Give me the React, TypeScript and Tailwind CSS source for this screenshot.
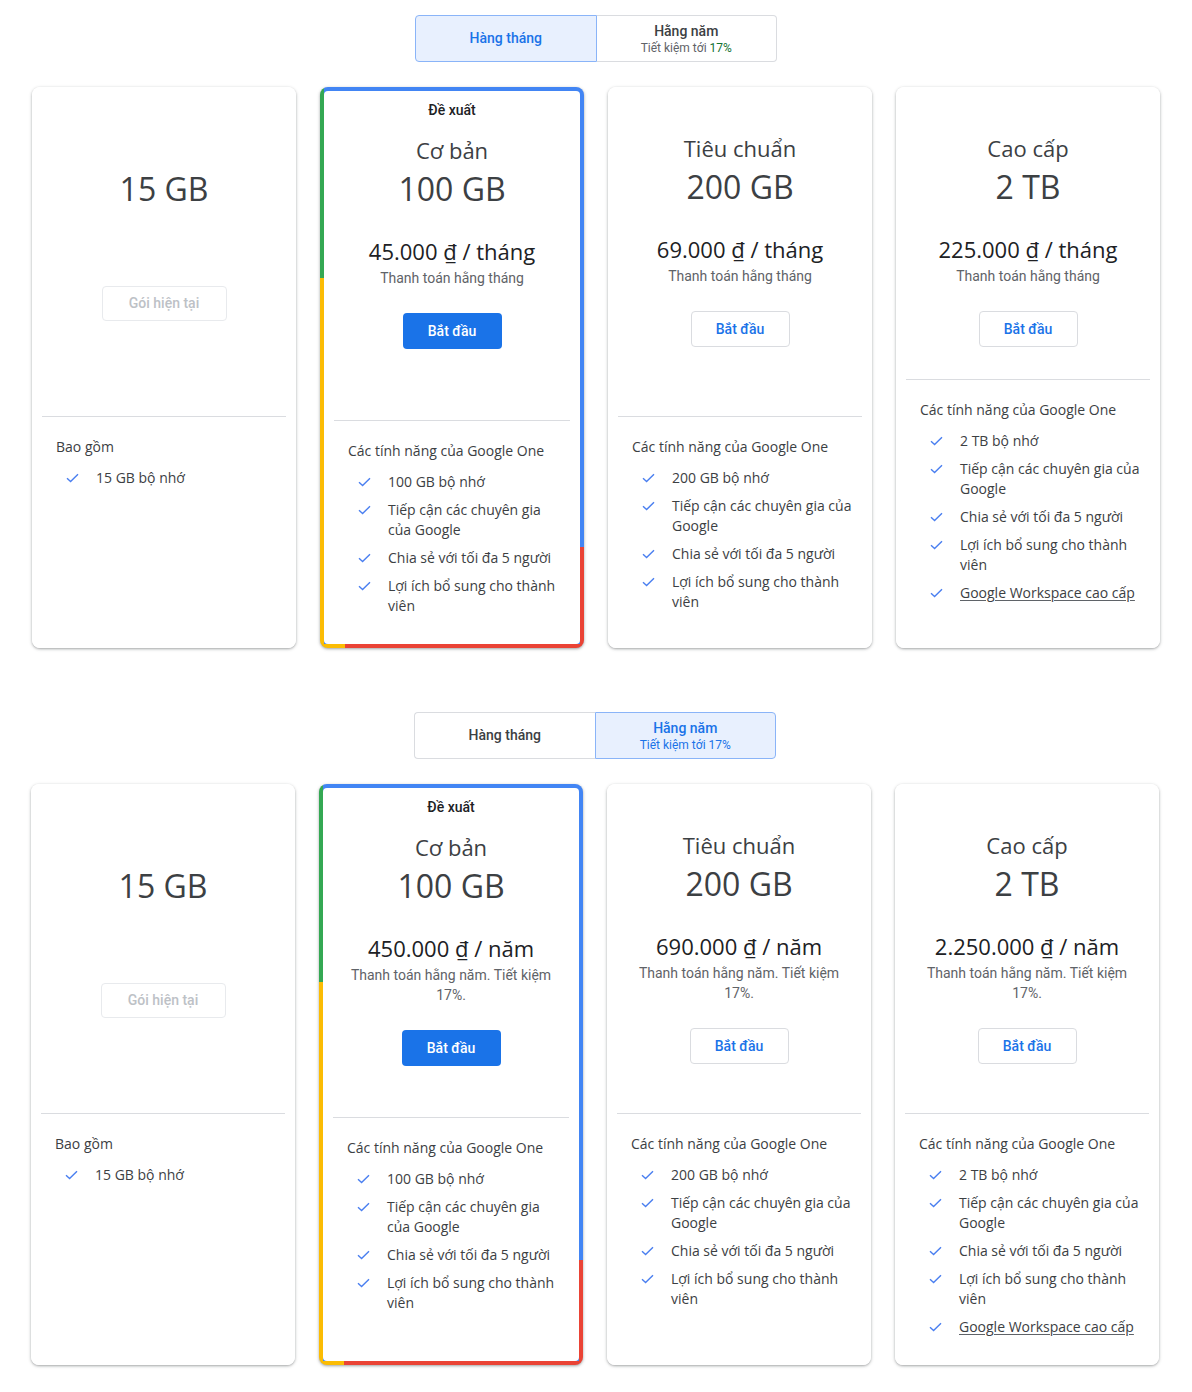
import React from 'react';

type Billing = 'month' | 'year';

interface Plan {
  id: string;
  label?: string;
  name?: string;
  size: string;
  monthPrice?: string;
  yearPrice?: string;
  current?: boolean;
  featuresTitle: string;
  features: string[];
  link?: string;
}

const PLANS: Plan[] = [
  {
    id: 'free',
    size: '15 GB',
    current: true,
    featuresTitle: 'Bao gồm',
    features: ['15 GB bộ nhớ'],
  },
  {
    id: 'basic',
    label: 'Đề xuất',
    name: 'Cơ bản',
    size: '100 GB',
    monthPrice: '45.000 ₫ / tháng',
    yearPrice: '450.000 ₫ / năm',
    featuresTitle: 'Các tính năng của Google One',
    features: ['100 GB bộ nhớ', 'Tiếp cận các chuyên gia của Google', 'Chia sẻ với tối đa 5 người', 'Lợi ích bổ sung cho thành viên'],
  },
  {
    id: 'standard',
    name: 'Tiêu chuẩn',
    size: '200 GB',
    monthPrice: '69.000 ₫ / tháng',
    yearPrice: '690.000 ₫ / năm',
    featuresTitle: 'Các tính năng của Google One',
    features: ['200 GB bộ nhớ', 'Tiếp cận các chuyên gia của Google', 'Chia sẻ với tối đa 5 người', 'Lợi ích bổ sung cho thành viên'],
  },
  {
    id: 'premium',
    name: 'Cao cấp',
    size: '2 TB',
    monthPrice: '225.000 ₫ / tháng',
    yearPrice: '2.250.000 ₫ / năm',
    featuresTitle: 'Các tính năng của Google One',
    features: ['2 TB bộ nhớ', 'Tiếp cận các chuyên gia của Google', 'Chia sẻ với tối đa 5 người', 'Lợi ích bổ sung cho thành viên'],
    link: 'Google Workspace cao cấp',
  },
];

const CheckIcon = () => (
  <svg width="13" height="10" viewBox="0 0 13 10" className="shrink-0 mt-[5px]">
    <path d="M1 5.2 L4.6 8.6 L12 1.2" fill="none" stroke="#4a7ff0" strokeWidth="1.4" />
  </svg>
);

// nút chọn kỳ thanh toán
const BillingToggle = ({ billing }: { billing: Billing }) => {
  const monthOn = billing === 'month';
  return (
    <div className="mx-auto flex w-[362px] h-[47px] font-['Roboto',sans-serif]">
      <div
        className={`flex-1 flex items-center justify-center rounded-l border ${
          monthOn ? 'bg-[#e8f0fe] border-[#8ab4f8] text-[#1a73e8]' : 'border-[#dadce0] border-r-0 text-[#3c4043]'
        }`}
      >
        <span className="text-[14px] font-medium">Hàng tháng</span>
      </div>
      <div
        className={`flex-1 flex flex-col items-center justify-center rounded-r border ${
          monthOn ? 'border-[#dadce0] border-l-0 text-[#3c4043]' : 'bg-[#e8f0fe] border-[#8ab4f8] text-[#1a73e8]'
        }`}
      >
        <span className="text-[14px] font-medium leading-[18px]">Hằng năm</span>
        <span className={`text-[12px] leading-[16px] ${monthOn ? 'text-[#5f6368]' : 'text-[#1a73e8]'}`}>
          Tiết kiệm tới <span className={monthOn ? 'text-[#137333]' : ''}>17%</span>
        </span>
      </div>
    </div>
  );
};

const PlanCard = ({ plan, billing, headerH }: { plan: Plan; billing: Billing; headerH: string }) => {
  const featured = !!plan.label;
  const price = billing === 'month' ? plan.monthPrice : plan.yearPrice;
  const note = billing === 'month' ? 'Thanh toán hằng tháng' : 'Thanh toán hằng năm. Tiết kiệm 17%.';

  const body = (
    <div className={`flex flex-col h-full bg-white ${featured ? 'rounded' : 'rounded-lg'}`}>
      <div className={`${headerH} shrink-0 flex flex-col items-center px-6 text-center`}>
        {plan.current ? (
          <>
            <div className="pt-[82px] text-[32px] leading-[40px] text-[#3c4043]">{plan.size}</div>
            <button className="mt-[77px] w-[125px] h-[35px] rounded border border-[#e8eaed] text-[14px] font-medium text-[#bdc1c6] font-['Roboto',sans-serif]">
              Gói hiện tại
            </button>
          </>
        ) : (
          <>
            {featured ? (
              <>
                <div className="pt-[9px] text-[14px] leading-[20px] font-medium text-[#202124] font-['Roboto',sans-serif]">{plan.label}</div>
                <div className="mt-[16px] text-[22px] leading-[28px] text-[#3c4043]">{plan.name}</div>
              </>
            ) : (
              <div className="pt-[47px] text-[22px] leading-[28px] text-[#3c4043]">{plan.name}</div>
            )}
            <div className="mt-[5px] text-[32px] leading-[40px] text-[#3c4043]">{plan.size}</div>
            <div className="mt-[28px] text-[22px] leading-[28px] text-[#202124]">{price}</div>
            <div className="mt-[3px] text-[14px] leading-[20px] text-[#5f6368] font-['Roboto',sans-serif]">{note}</div>
            <button
              className={`mt-[25px] w-[99px] h-[36px] rounded text-[14px] font-medium font-['Roboto',sans-serif] ${
                featured ? 'bg-[#1a73e8] text-white' : 'border border-[#dadce0] text-[#1a73e8]'
              }`}
            >
              Bắt đầu
            </button>
          </>
        )}
      </div>
      <div className="mx-2.5 h-px bg-[#dadce0]" />
      <div className="flex-1 pt-5 pl-6 pr-4 text-[14px] leading-[20px] text-[#3c4043]">
        <div>{plan.featuresTitle}</div>
        <ul className="mt-[11px] flex flex-col gap-2">
          {plan.features.map((f) => (
            <li key={f} className="flex">
              <span className="w-10 shrink-0 pl-[10px] flex">
                <CheckIcon />
              </span>
              <span>{f}</span>
            </li>
          ))}
          {plan.link && (
            <li className="flex">
              <span className="w-10 shrink-0 pl-[10px] flex">
                <CheckIcon />
              </span>
              <a className="underline underline-offset-2 decoration-[#5f6368]">{plan.link}</a>
            </li>
          )}
        </ul>
      </div>
    </div>
  );

  if (featured) {
    return (
      <div className="rounded-lg p-1 shadow-[0_1px_2px_rgba(60,64,67,0.3),0_1px_3px_1px_rgba(60,64,67,0.15)] [background:linear-gradient(to_bottom,#34a853_34%,#fbbc04_34%)_left/4px_100%_no-repeat,linear-gradient(to_bottom,#4285f4_82%,#ea4335_82%)_right/4px_100%_no-repeat,linear-gradient(to_right,#fbbc04_9.5%,#ea4335_9.5%)_bottom/100%_4px_no-repeat,#4285f4]">
        {body}
      </div>
    );
  }
  return (
    <div className="rounded-lg bg-white shadow-[0_1px_2px_rgba(60,64,67,0.3),0_1px_3px_1px_rgba(60,64,67,0.15)]">
      {body}
    </div>
  );
};

const PlanSection = ({ billing, className, cardH, headers }: { billing: Billing; className: string; cardH: string; headers: string[] }) => (
  <section className={className}>
    <BillingToggle billing={billing} />
    <div className={`mt-[25px] grid grid-cols-4 gap-6 ${cardH}`}>
      {PLANS.map((p, i) => (
        <PlanCard key={p.id} plan={p} billing={billing} headerH={headers[i]} />
      ))}
    </div>
  </section>
);

const App: React.FC = () => {
  return (
    <div className="bg-white w-[1192px] min-h-[1392px] font-['Open_Sans','Roboto',sans-serif]">
      <PlanSection
        billing="month"
        className="pt-[15px] pb-[49px] px-8"
        cardH="h-[561px]"
        headers={['h-[329px]', 'h-[329px]', 'h-[329px]', 'h-[292px]']}
      />
      <PlanSection
        billing="year"
        className="pt-[15px] pb-[27px] pl-[31px] pr-[33px]"
        cardH="h-[581px]"
        headers={['h-[329px]', 'h-[329px]', 'h-[329px]', 'h-[329px]']}
      />
    </div>
  );
};

export default App;
